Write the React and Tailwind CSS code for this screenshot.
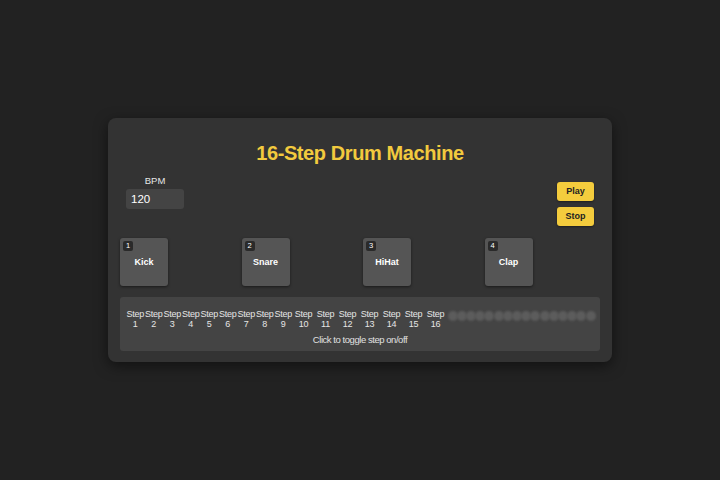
import React, { useState } from 'react'

const pads = [
  { key: '1', name: 'Kick' },
  { key: '2', name: 'Snare' },
  { key: '3', name: 'HiHat' },
  { key: '4', name: 'Clap' },
]

const steps = Array.from({ length: 16 }, (_, i) => i + 1)

export default function App() {
  const [bpm, setBpm] = useState(120)
  const [active, setActive] = useState(Array(16).fill(false))

  const toggle = (i) => setActive((prev) => prev.map((v, j) => (j === i ? !v : v)))

  return (
    <div className="w-[720px] h-[480px] bg-[#222222] flex items-start justify-center pt-[118px] font-['Liberation_Sans',Arial,sans-serif]">
      <div className="w-[504px] h-[244px] bg-[#333333] rounded-lg shadow-[0_4px_14px_rgba(0,0,0,0.5)] px-3 pt-[21px] flex flex-col">
        <h1 className="text-[20px] leading-[28px] font-bold tracking-[-0.4px] text-[#f2ca3e] text-center">16-Step Drum Machine</h1>

        <div className="flex justify-between items-start mt-2 h-[51px]">
          <div className="ml-[6px] flex flex-col items-center w-[58px]">
            <label className="text-[9.5px] leading-[12px] text-[#e6e6e6]">BPM</label>
            <input
              value={bpm}
              onChange={(e) => setBpm(e.target.value)}
              className="mt-[2px] w-[58px] h-[20px] bg-[#444444] rounded-[3px] text-white text-[11.5px] px-[5px] outline-none"
            />
          </div>
          <div className="mr-[6px] mt-[7px] flex flex-col gap-[6px]">
            <button className="w-[37px] h-[19px] bg-[#f4cc3d] rounded-[3px] text-[#222] text-[9px] font-bold pt-[1px] shadow-[0_1px_2px_rgba(0,0,0,0.4)]">Play</button>
            <button className="w-[37px] h-[19px] bg-[#f4cc3d] rounded-[3px] text-[#222] text-[9px] font-bold pt-[1px] shadow-[0_1px_2px_rgba(0,0,0,0.4)]">Stop</button>
          </div>
        </div>

        <div className="flex gap-[73.5px] mt-[12px]">
          {pads.map((p) => (
            <div key={p.key} className="relative w-12 h-12 bg-[#555555] rounded-[3px] shadow-[0_1px_3px_rgba(0,0,0,0.5)] flex items-center justify-center">
              <span className="absolute top-[3px] left-[3px] w-[10px] h-[10px] bg-[#2a2a2a] rounded-[2px] text-white text-[7.5px] leading-[10px] text-center">{p.key}</span>
              <span className="text-white text-[9px] font-bold pt-[1px]">{p.name}</span>
            </div>
          ))}
        </div>

        <div className="mt-[11px] h-[54px] bg-[#444444] rounded-[3px] pt-[12px] px-[6px] flex flex-col">
          <div className="flex items-center">
            {steps.map((n) => (
              <div key={n} className={(n < 10 ? 'w-[18.5px]' : 'w-[22px]') + ' text-center text-[9px] leading-[10px] tracking-[-0.2px] text-[#e6e6e6] shrink-0'}>
                Step<br />{n}
              </div>
            ))}
            <div className="flex ml-[1px] mt-[-6px]">
              {steps.map((n, i) => (
                <button
                  key={n}
                  onClick={() => toggle(i)}
                  className={(active[i] ? 'bg-[#f4cc3d]' : 'bg-[#5c5c5c]') + ' w-[10px] h-[10px] rounded-full mr-[-0.8px] blur-[0.8px] shrink-0'}
                />
              ))}
            </div>
          </div>
          <p className="mt-[5px] text-center text-[9.5px] leading-[12px] tracking-[-0.45px] text-[#e0e0e0]">Click to toggle step on/off</p>
        </div>
      </div>
    </div>
  )
}
